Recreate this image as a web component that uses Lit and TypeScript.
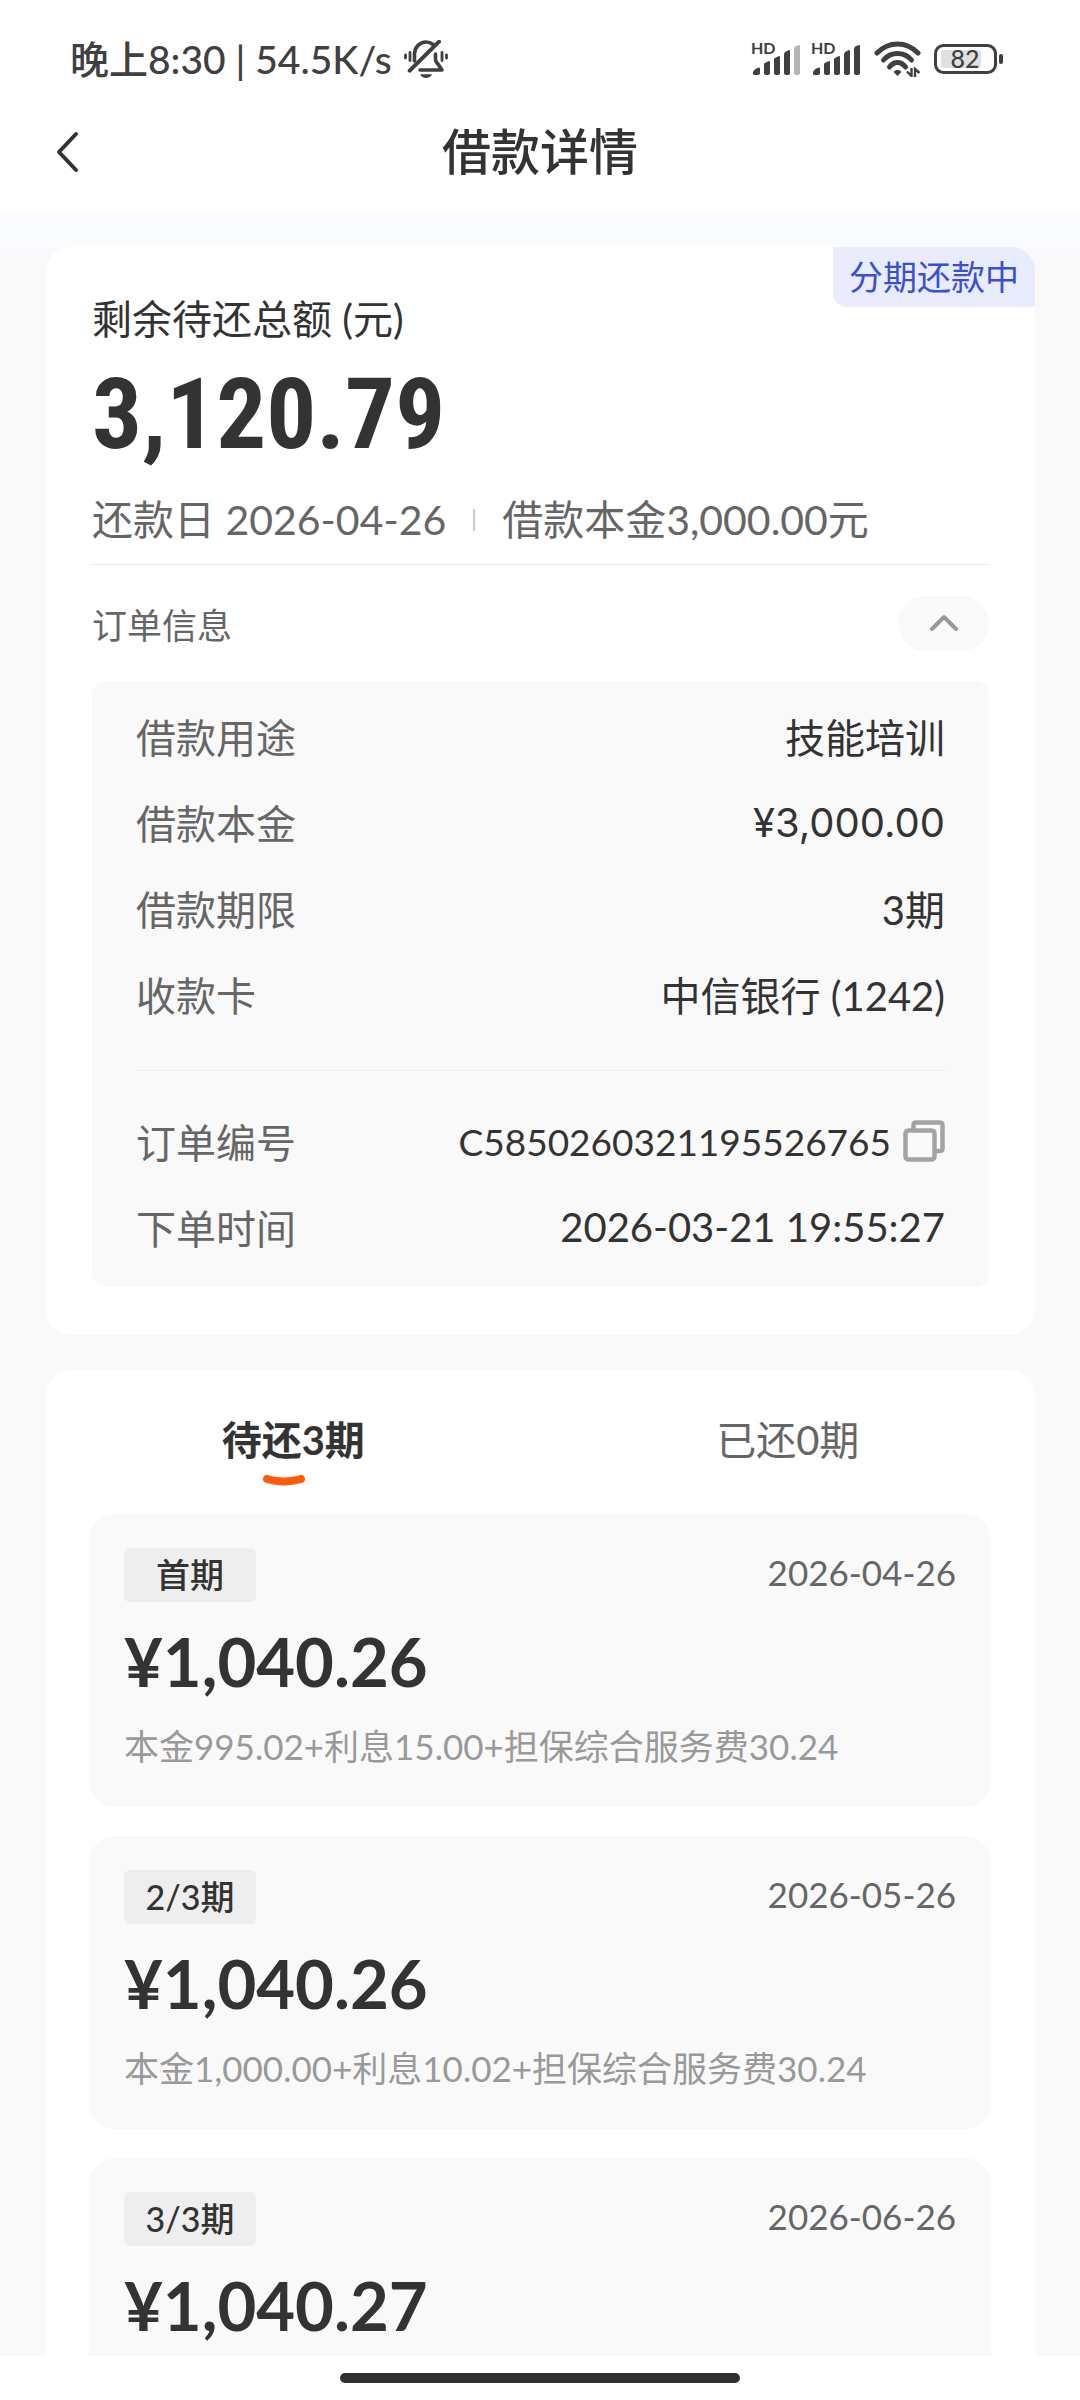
import { LitElement, html, css, svg } from "lit";
import { customElement, property, state } from "lit/decorators.js";
import { classMap } from "lit/directives/class-map.js";

interface Installment {
  label: string;
  date: string;
  amount: string;
  detail?: string;
}

const INSTALLMENTS: Installment[] = [
  { label: "首期", date: "2026-04-26", amount: "¥1,040.26", detail: "本金995.02+利息15.00+担保综合服务费30.24" },
  { label: "2/3期", date: "2026-05-26", amount: "¥1,040.26", detail: "本金1,000.00+利息10.02+担保综合服务费30.24" },
  { label: "3/3期", date: "2026-06-26", amount: "¥1,040.27" },
];

/** Phone status bar: clock, network speed, signal and battery. */
@customElement("status-bar")
export class StatusBar extends LitElement {
  static styles = css`
    :host {
      display: block;
      color: #404040;
    }
    .bar {
      display: flex;
      align-items: center;
      justify-content: space-between;
      padding: 29px 76px 0 70px;
      height: 60px;
    }
    .left {
      display: flex;
      align-items: center;
      gap: 12px;
      font-size: 39px;
      font-weight: 500;
      line-height: 52px;
      white-space: pre;
    }
    .right {
      display: flex;
      align-items: center;
      gap: 12px;
    }
    .signals {
      display: flex;
      gap: 9px;
    }
    svg {
      display: block;
    }
    .hd {
      font: 700 16px "Lato", sans-serif;
      fill: #404040;
    }
    .level {
      font: 500 25px "Lato", sans-serif;
      fill: #404040;
    }
  `;

  private signal(full: boolean) {
    return html`<svg width="51" height="46" viewBox="0 -6 51 46" aria-hidden="true">
      <text class="hd" x="0" y="12">HD</text>
      <g fill="#404040">
        <path d="M2 32v-1q0-4 6-5.500q1 0 1 1V31q0 2-2 2H4q-2 0-2-1z" />
        <path d="M13 22q0-1 5-3q1 0 1 1V31q0 2-2 2H15q-2 0-2-2z" />
        <path d="M23 17q0-1 5-3q1 0 1 1V31q0 2-2 2H25q-2 0-2-2z" />
        <path d="M33 12q0-2 5-4q1 0 1 1V31q0 2-2 2H35q-2 0-2-2z" />
        <path
          fill=${full ? "#404040" : "#b5b5b5"}
          d="M43 7q0-3 5-4q1 0 1 1V31q0 2-2 2H45q-2 0-2-2z"
        />
      </g>
    </svg>`;
  }

  render() {
    return html`<div class="bar">
      <div class="left">
        <span>晚上8:30 | 54.5K/s</span>
        <svg width="44" height="38" viewBox="0 0 44 38" fill="none" stroke="#404040" stroke-linecap="round" aria-hidden="true">
          <path d="M10.500 21V14C10.500 7 16 2 22 2Q26 2 29 4.500" stroke-width="3.600" />
          <path d="M5.700 30.700L35 1.700" stroke-width="4" />
          <path d="M31.500 14V19Q31.500 22 34 24L38 30H16" stroke-width="3.600" stroke-linejoin="round" />
          <path d="M16 34.200H28Q26 38 22 38T16 34.200z" fill="#404040" stroke="none" />
          <path d="M1.500 15V18M6 12.500V20.500M38 12.500V20.500M42.500 15V18" stroke-width="2.800" />
        </svg>
      </div>
      <div class="right">
        <div class="signals">${this.signal(false)}${this.signal(true)}</div>
        <svg width="48" height="36" viewBox="0 0 48 36" fill="none" stroke="#404040" stroke-width="5" aria-hidden="true">
          <path d="M3 12Q12 3 23.500 3T44 12" stroke-linecap="round" />
          <path d="M9.500 19Q15 12.500 23.500 12.500T37.500 19" stroke-linecap="round" />
          <path d="M15.500 26Q19 21.500 23.500 21.500T31.500 26" stroke-linecap="round" />
          <path d="M19.500 31Q23.500 26.500 27.500 31L23.500 35z" fill="#404040" stroke="none" />
          <path d="M37.500 27V35L33 30.500M41 36V28L45.500 32" stroke-width="2.400" />
        </svg>
        <svg width="70" height="30" viewBox="0 0 70 30" role="img" aria-label="电量">
          <rect x="1.500" y="1.500" width="60" height="27" rx="8" fill="none" stroke="#404040" stroke-width="3" />
          <rect x="7" y="6" width="40" height="18" rx="3" fill="#e0e0e0" />
          <rect x="65" y="10" width="4" height="10" rx="2" fill="#404040" />
          <text class="level" x="31" y="24" text-anchor="middle">82</text>
        </svg>
      </div>
    </div>`;
  }
}

/** One repayment period inside the plan list. */
@customElement("installment-card")
export class InstallmentCard extends LitElement {
  @property({ attribute: false }) item!: Installment;

  static styles = css`
    :host {
      display: block;
    }
    .card {
      box-sizing: border-box;
      min-height: 293px;
      padding: 34px 35px 30px;
      border-radius: 26px;
      background: #f9f9f9;
    }
    .head {
      display: flex;
      justify-content: space-between;
      align-items: flex-start;
    }
    .tag {
      min-width: 132px;
      border-radius: 6px;
      background: #eee;
      text-align: center;
      font-size: 34px;
      font-weight: 500;
      line-height: 54px;
    }
    .date {
      color: #666;
      font-size: 35px;
      line-height: 48px;
    }
    .amount {
      margin-top: 18px;
      font-size: 67px;
      font-weight: 700;
      line-height: 82px;
    }
    .detail {
      margin: 19px 0 0;
      color: #999;
      font-size: 35px;
      line-height: 50px;
      white-space: nowrap;
    }
  `;

  render() {
    const { label, date, amount, detail } = this.item;
    return html`<article class="card">
      <div class="head">
        <span class="tag">${label}</span>
        <time class="date" datetime=${date}>${date}</time>
      </div>
      <div class="amount">${amount}</div>
      ${detail ? html`<p class="detail">${detail}</p>` : null}
    </article>`;
  }
}

@customElement("app-root")
export class AppRoot extends LitElement {
  @state() private open = true;
  @state() private tab = 0;

  static styles = css`
    :host {
      display: flex;
      flex-direction: column;
      height: 100vh;
      background: #fff;
      color: #333;
      font-family: "Lato", "Noto Sans CJK SC", sans-serif;
    }
    button {
      margin: 0;
      padding: 0;
      border: 0;
      background: none;
      color: inherit;
      font: inherit;
      cursor: pointer;
    }
    svg {
      display: block;
    }
    .title-bar {
      display: grid;
      grid-template-columns: 1fr auto 1fr;
      align-items: center;
      height: 123px;
      padding: 0 45px;
    }
    .back {
      justify-self: start;
      padding: 12px 10px 10px;
    }
    h1 {
      margin: 0;
      font-size: 49px;
      font-weight: 500;
      line-height: 72px;
    }
    .scroll {
      flex: 1;
      min-height: 0;
      overflow-y: auto;
      scrollbar-width: none;
      padding: 35px 45px 0 46px;
      background: linear-gradient(#f9fbff 36px, #f9f9f9 36px);
    }
    .panel {
      position: relative;
      border-radius: 26px;
      background: #fff;
    }
    .summary {
      padding: 46px 46px 48px;
      margin-bottom: 35px;
    }
    .state {
      position: absolute;
      top: 0;
      right: 0;
      padding: 0 16px;
      border-radius: 0 24px 0 14px;
      background: #e8ecfc;
      color: #3b4fd0;
      font-size: 34px;
      line-height: 60px;
    }
    .label {
      font-size: 40px;
      line-height: 52px;
    }
    .total {
      font-family: "Roboto Condensed", "Roboto", sans-serif;
      font-size: 99px;
      font-weight: 700;
      line-height: 138px;
    }
    .meta {
      display: flex;
      align-items: center;
      gap: 27px;
      padding: 8px 0 15px;
      border-bottom: 1px solid #eaeaea;
      color: #666;
      font-size: 41px;
      line-height: 58px;
    }
    .bar {
      width: 2px;
      height: 22px;
      background: #ccc;
    }
    .money {
      font-family: "Inter", "Noto Sans CJK SC", sans-serif;
    }
    .order-head {
      display: flex;
      align-items: center;
      justify-content: space-between;
      height: 116px;
      color: #666;
      font-size: 35px;
    }
    .toggle {
      display: grid;
      place-items: center;
      width: 91px;
      height: 55px;
      border-radius: 28px;
      background: #f9f9f9;
    }
    .closed {
      transform: rotate(180deg);
    }
    .order {
      margin: 0;
      padding: 12px 44px 17px;
      border-radius: 14px;
      background: #f9f9f9;
      font-size: 40px;
    }
    .row {
      display: flex;
      align-items: center;
      justify-content: space-between;
      height: 86px;
    }
    .row dt {
      color: #666;
    }
    .row dd {
      display: flex;
      align-items: center;
      gap: 12px;
      margin: 0;
    }
    .number {
      font-size: 37px;
    }
    .rule {
      height: 0;
      margin: 33px 0 27px;
      border: 0;
      border-top: 1px solid #eee;
    }
    .plan {
      padding: 0 44px 30px 43px;
    }
    .tabs {
      display: grid;
      grid-template-columns: 1fr 1fr;
      margin: 0 -44px 0 -43px;
      padding: 41px 0 27px;
    }
    .tab {
      display: flex;
      flex-direction: column;
      align-items: center;
      gap: 6px;
      height: 76px;
      color: #666;
      font-size: 40px;
      line-height: 58px;
    }
    .on {
      color: #333;
      font-weight: 700;
    }
    .smile {
      margin-right: 18px;
    }
    .list {
      display: flex;
      flex-direction: column;
      gap: 29px;
    }
    .home {
      display: grid;
      place-items: center;
      height: 44px;
    }
    .handle {
      width: 37%;
      height: 10px;
      border-radius: 5px;
      background: #303030;
    }
  `;

  private row(name: string, value: unknown, cls = "") {
    return html`<div class="row">
      <dt>${name}</dt>
      <dd class=${cls}>${value}</dd>
    </div>`;
  }

  private tabButton(index: number, text: string) {
    const on = this.tab === index;
    return html`<button
      class=${classMap({ tab: true, on })}
      role="tab"
      aria-selected=${on}
      @click=${() => (this.tab = index)}
    >
      <span>${text}</span>
      ${on
        ? html`<svg class="smile" width="42" height="12" viewBox="0 0 42 12" aria-hidden="true">
            ${svg`<path d="M4 4Q21 9 38 4" fill="none" stroke="#ff5a0a" stroke-width="8" stroke-linecap="round" />`}
          </svg>`
        : null}
    </button>`;
  }

  render() {
    return html`
      <status-bar></status-bar>
      <header class="title-bar">
        <button class="back" aria-label="返回">
          <svg width="26" height="42" viewBox="0 0 26 42" fill="none" stroke="#333" stroke-width="4" stroke-linecap="round" stroke-linejoin="round">
            <path d="M21 3L4 21L21 39" />
          </svg>
        </button>
        <h1>借款详情</h1>
      </header>
      <main class="scroll">
        <section class="panel summary">
          <span class="state">分期还款中</span>
          <div class="label">剩余待还总额 (元)</div>
          <div class="total">3,120.79</div>
          <div class="meta">
            <span>还款日 2026-04-26</span>
            <i class="bar"></i>
            <span>借款本金3,000.00元</span>
          </div>
          <div class="order-head">
            <span>订单信息</span>
            <button class="toggle" aria-label="订单信息" aria-expanded=${this.open} @click=${() => (this.open = !this.open)}>
              <svg class=${classMap({ closed: !this.open })} width="30" height="20" viewBox="0 0 30 20" fill="none" stroke="#999" stroke-width="4" stroke-linecap="round" stroke-linejoin="round">
                <path d="M3 16L15 4L27 16" />
              </svg>
            </button>
          </div>
          ${this.open
            ? html`<dl class="order">
                ${this.row("借款用途", "技能培训")}
                ${this.row("借款本金", "¥3,000.00", "money")}
                ${this.row("借款期限", "3期")}
                ${this.row("收款卡", "中信银行 (1242)")}
                <hr class="rule" />
                ${this.row(
                  "订单编号",
                  html`<span class="number">C5850260321195526765</span>
                    <button aria-label="复制">
                      <svg width="42" height="42" viewBox="0 0 42 42" fill="none" stroke="#a3a3a3" stroke-width="4.500">
                        <rect x="2.500" y="10.500" width="29" height="29" rx="3" />
                        <path d="M10.500 9V5Q10.500 2.500 13 2.500H36.500Q39.500 2.500 39.500 5.500V28.500Q39.500 31 37 31H33" />
                      </svg>
                    </button>`,
                )}
                ${this.row("下单时间", "2026-03-21 19:55:27")}
              </dl>`
            : null}
        </section>
        <section class="panel plan">
          <div class="tabs" role="tablist">
            ${this.tabButton(0, "待还3期")} ${this.tabButton(1, "已还0期")}
          </div>
          <div class="list">
            ${this.tab === 0
              ? INSTALLMENTS.map((item) => html`<installment-card .item=${item}></installment-card>`)
              : null}
          </div>
        </section>
      </main>
      <footer class="home"><div class="handle"></div></footer>
    `;
  }
}
